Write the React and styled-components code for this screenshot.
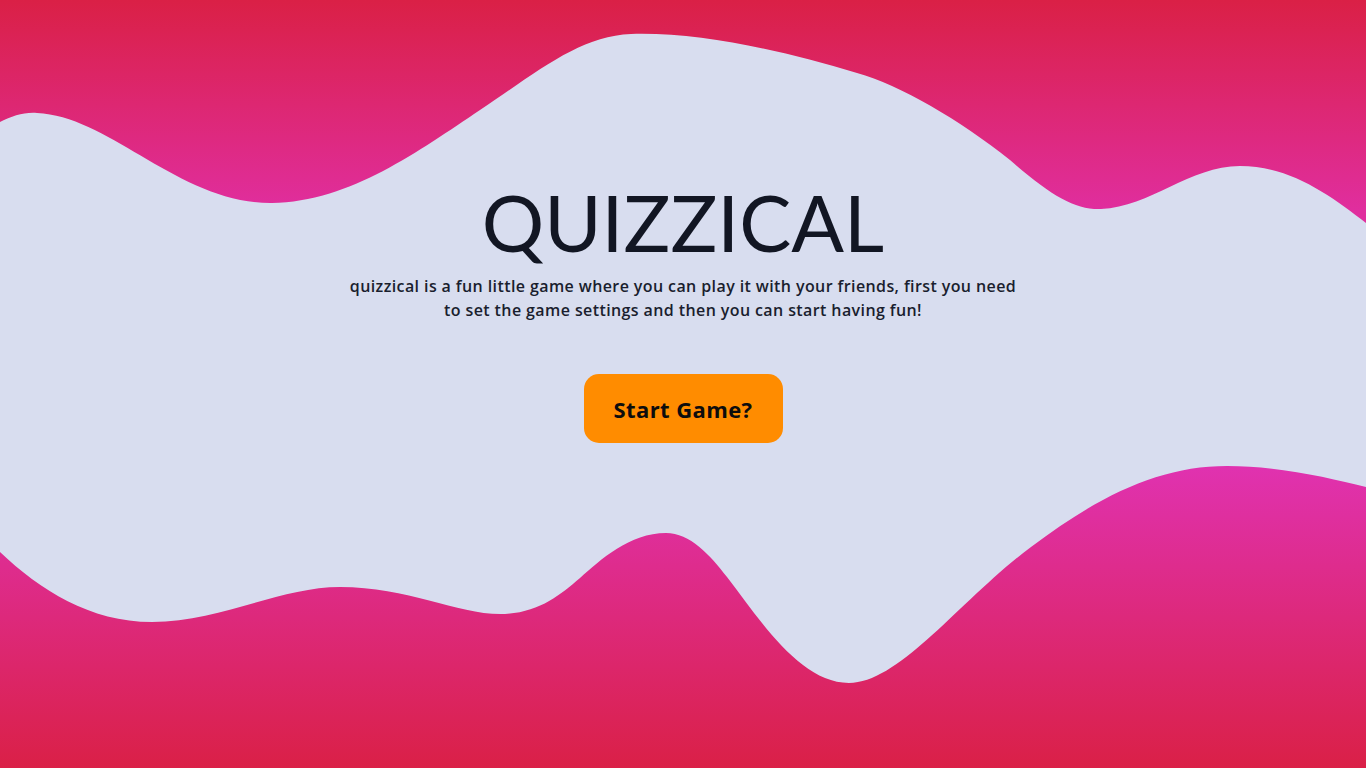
import styled, { createGlobalStyle } from "styled-components";

const GlobalStyle = createGlobalStyle`
  * { box-sizing: border-box; }
  html, body { margin: 0; padding: 0; }
  body {
    background: #d8ddef;
    font-family: "Open Sans", "Liberation Sans", sans-serif;
    color: #141826;
  }
`;

const Page = styled.div`
  position: relative;
  width: 100%;
  height: 768px;
  overflow: hidden;
  background: #d8ddef;
`;

const Blob = styled.svg`
  position: absolute;
  inset: 0;
  width: 100%;
  height: 100%;
  z-index: 0;
`;

const Main = styled.main`
  position: relative;
  z-index: 1;
  display: flex;
  flex-direction: column;
  align-items: center;
  padding-top: 177px;
`;

const Title = styled.h1`
  margin: 0;
  font-family: "Lato", "Open Sans", sans-serif;
  font-weight: 400;
  font-size: 78px;
  line-height: 90px;
  letter-spacing: 0;
  color: #121623;
`;

const Intro = styled.p`
  margin: 7px 0 0;
  max-width: 674px;
  text-align: center;
  font-size: 16px;
  font-weight: 600;
  line-height: 24px;
  letter-spacing: 0.4px;
  color: #1a1e2e;
`;

const StartButton = styled.button`
  margin-top: 52px;
  width: 199px;
  height: 69px;
  border: none;
  border-radius: 15px;
  background: #ff8c00;
  font-family: "Open Sans", sans-serif;
  font-size: 22px;
  font-weight: 700;
  letter-spacing: 0.4px;
  color: #0d0d0d;
  cursor: pointer;
`;

function Waves() {
  return (
    <Blob viewBox="0 0 1366 768" preserveAspectRatio="none" aria-hidden="true">
      <defs>
        <linearGradient id="topFill" x1="0" y1="0" x2="0" y2="210" gradientUnits="userSpaceOnUse">
          <stop offset="0" stopColor="#da2046" />
          <stop offset="1" stopColor="#e02e9e" />
        </linearGradient>
        <linearGradient id="bottomFill" x1="0" y1="466" x2="0" y2="768" gradientUnits="userSpaceOnUse">
          <stop offset="0" stopColor="#e032b0" />
          <stop offset="1" stopColor="#da2047" />
        </linearGradient>
      </defs>
      <path
        fill="url(#topFill)"
        d="M0,122 C12,116 24,112 37,113 C110,116 180,204 272,203 C350,202 420,150 480,110 C540,70 580,36 631,34 C700,32 780,50 857,73 C900,85 960,120 1010,160 C1050,195 1075,210 1101,209 C1150,207 1190,166 1240,166 C1290,166 1330,195 1366,223 L1366,0 L0,0 Z"
      />
      <path
        fill="url(#bottomFill)"
        d="M0,552 C40,590 90,622 152,622 C220,622 280,587 340,587 C410,587 460,616 505,614 C540,612 560,595 580,578 C600,560 630,533 666,533 C690,533 710,555 727,577 C760,620 800,683 849,683 C900,683 960,600 1031,547 C1100,495 1160,466 1227,466 C1280,466 1330,478 1366,487 L1366,768 L0,768 Z"
      />
    </Blob>
  );
}

export default function App() {
  return (
    <>
      <GlobalStyle />
      <Page>
        <Waves />
        <Main>
          <Title>QUIZZICAL</Title>
          <Intro>
            quizzical is a fun little game where you can play it with your friends, first you need
            to set the game settings and then you can start having fun!
          </Intro>
          <StartButton>Start Game?</StartButton>
        </Main>
      </Page>
    </>
  );
}
